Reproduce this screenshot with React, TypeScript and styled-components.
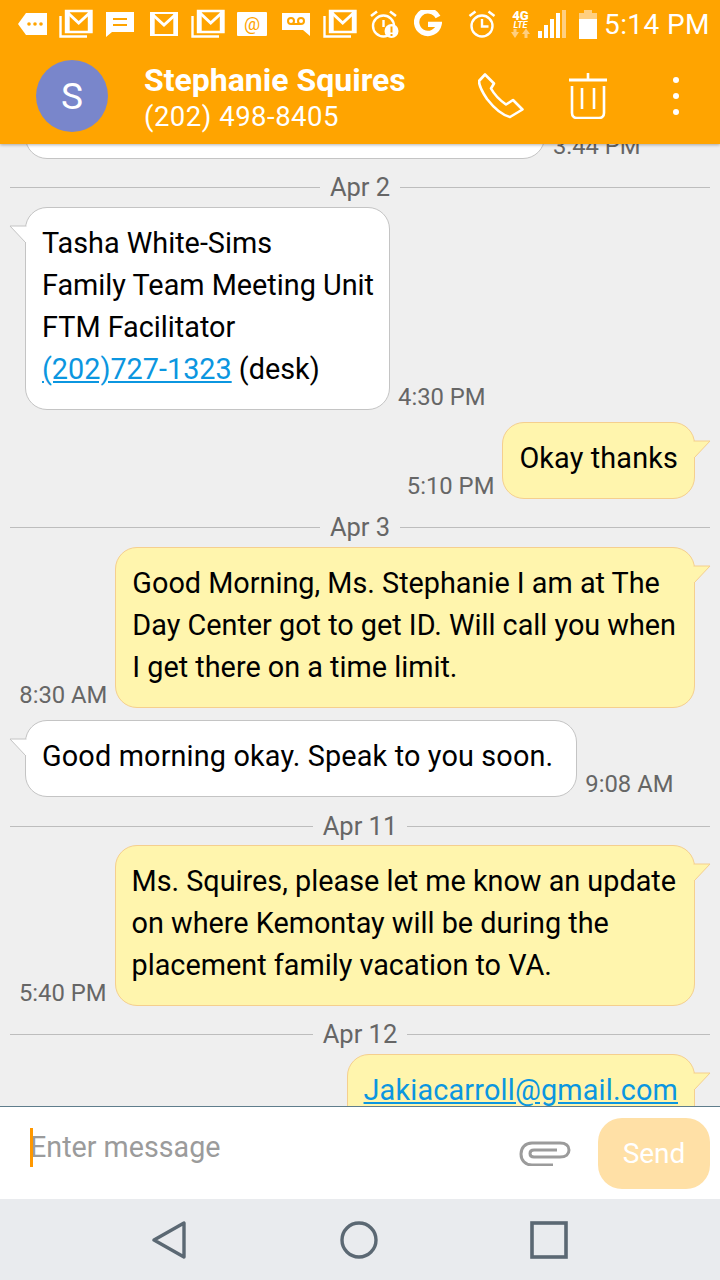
import React from "react";
import styled, { createGlobalStyle } from "styled-components";

const GlobalStyle = createGlobalStyle`
  html, body {
    margin: 0;
    padding: 0;
    background: #efefef;
  }
  body {
    font-family: Roboto, "Noto Sans", sans-serif;
  }
`;

const Screen = styled.div`
  width: 720px;
  height: 1280px;
  display: flex;
  flex-direction: column;
  overflow: hidden;
  background: #efefef;
`;

const TopBar = styled.header`
  height: 144px;
  flex: none;
  background: #ffa400;
  color: #fff;
  display: flex;
  flex-direction: column;
  box-shadow: 0 1px 3px rgba(0, 0, 0, 0.3);
  position: relative;
  z-index: 2;
`;

const StatusBar = styled.div`
  height: 48px;
  display: flex;
  align-items: center;
  padding: 0 12px 0 18px;
`;

const StatusIcon = styled.svg<{ $ml?: number }>`
  display: block;
  flex: none;
  margin-left: ${({ $ml }) => $ml ?? 0}px;
`;

const Clock = styled.span`
  font-size: 28px;
  margin: 1px 0 0 7px;
  letter-spacing: 0.4px;
  white-space: nowrap;
`;

const ContactBar = styled.div`
  flex: 1;
  display: flex;
  align-items: center;
  padding: 0 0 0 36px;
`;

const Avatar = styled.div`
  width: 72px;
  height: 72px;
  border-radius: 50%;
  background: #7986cb;
  display: flex;
  align-items: center;
  justify-content: center;
  font-size: 37px;
  margin-right: 36px;
  flex: none;
`;

const ContactInfo = styled.div`
  flex: 1;
  display: flex;
  flex-direction: column;
  padding-top: 5px;
`;

const ContactName = styled.div`
  font-size: 32px;
  font-weight: 700;
  line-height: 37px;
  white-space: nowrap;
`;

const ContactPhone = styled.div`
  font-size: 27.5px;
  line-height: 36px;
  letter-spacing: 0.5px;
  white-space: nowrap;
`;

const Actions = styled.div`
  display: flex;
  align-items: center;
  width: 242px;
  flex: none;
`;

const MessageList = styled.main`
  flex: 1;
  min-height: 0;
  overflow: hidden;
  display: flex;
  flex-direction: column;
`;

const DateRow = styled.div<{ $mt: number }>`
  display: flex;
  align-items: center;
  height: 40px;
  margin-top: ${({ $mt }) => $mt}px;
  padding: 0 10px;
  gap: 10px;
  color: #666;
  font-size: 25.5px;
  flex: none;

  &::before,
  &::after {
    content: "";
    flex: 1;
    height: 1px;
    background: #bdbdbd;
  }
`;

const Row = styled.div<{ $mine?: boolean; $mt: number }>`
  display: flex;
  flex: none;
  align-items: flex-end;
  flex-direction: ${({ $mine }) => ($mine ? "row-reverse" : "row")};
  margin-top: ${({ $mt }) => $mt}px;
  padding: 0 25px;
`;

const Bubble = styled.div<{ $mine?: boolean; $track?: number; $endPad?: number }>`
  position: relative;
  box-sizing: border-box;
  padding: 14px ${({ $mine, $endPad }) => $endPad ?? ($mine ? 18 : 15)}px 19px 16px;
  border-radius: 22px;
  font-size: 28.8px;
  line-height: 42px;
  letter-spacing: ${({ $track }) => $track ?? 0}px;
  color: #000;
  white-space: nowrap;
  background: ${({ $mine }) => ($mine ? "#fff5ad" : "#fff")};
  border: 1px solid ${({ $mine }) => ($mine ? "#f5cf8e" : "#c4c4c4")};
`;

const ClippedBubble = styled(Bubble)`
  width: 520px;
  height: 85px;
`;

const Tail = styled.svg<{ $mine?: boolean }>`
  position: absolute;
  top: 17px;
  ${({ $mine }) => ($mine ? "right: -17px;" : "left: -17px;")}
`;

const Time = styled.span<{ $mine?: boolean }>`
  font-size: 23.8px;
  color: #666;
  line-height: 25px;
  margin: ${({ $mine }) => ($mine ? "0 8px 0 0" : "0 0 0 8px")};
  white-space: nowrap;
`;

const MessageLink = styled.a`
  color: #0b96e0;
  text-decoration: underline;
`;

const Composer = styled.footer`
  height: 93px;
  flex: none;
  box-sizing: border-box;
  background: #fff;
  border-top: 1px solid #5f7d8c;
  display: flex;
  align-items: center;
  padding: 0 10px 0 30px;
`;

const Placeholder = styled.div`
  flex: 1;
  font-size: 28.7px;
  color: #9b9b9b;
  line-height: 39px;
  margin-top: -12px;
  position: relative;

  &::before {
    content: "";
    position: absolute;
    left: 0;
    top: 0;
    width: 3px;
    height: 39px;
    background: #ff9800;
  }
`;

const SendButton = styled.button`
  width: 112px;
  height: 71px;
  border: none;
  border-radius: 24px;
  background: #ffe0a6;
  color: #fff;
  font-family: Roboto, sans-serif;
  font-size: 28px;
  margin-left: 27px;
  padding: 0;
`;

const NavBar = styled.nav`
  height: 81px;
  flex: none;
  background: #e9ebee;
  display: flex;
  align-items: center;
  padding: 0 0 0 152px;
`;

const incoming = (
  <Tail width="18" height="20" viewBox="0 0 18 20">
    <path d="M17 1H1L17 18" fill="#fff" stroke="#c4c4c4" strokeWidth="1" />
    <rect x="16" y="2" width="2" height="15" fill="#fff" />
  </Tail>
);

const outgoing = (
  <Tail $mine width="18" height="20" viewBox="0 0 18 20">
    <path d="M1 1H17L1 18" fill="#fff5ad" stroke="#f5cf8e" strokeWidth="1" />
    <rect x="0" y="2" width="2" height="15" fill="#fff5ad" />
  </Tail>
);

const GmailStack = ({ ml }: { ml: number }) => (
  <StatusIcon $ml={ml} width="34" height="30" viewBox="0 0 34 30" fill="none" stroke="#fff" strokeWidth="2.4">
    <path d="M1.5 7V27.5H28" />
    <path d="M7 2H32.5V23H7Z" />
    <path d="M9 4L19.7 14L30.5 4" strokeWidth="3" />
    <path d="M9 3V22M30.5 3V22" strokeWidth="3.4" />
  </StatusIcon>
);

const GmailSingle = ({ ml }: { ml: number }) => (
  <StatusIcon $ml={ml} width="28" height="24" viewBox="0 0 28 24" fill="none" stroke="#fff">
    <path d="M1 1H27V23H1Z" strokeWidth="2.2" />
    <path d="M3 3L14 13L25 3" strokeWidth="3" />
    <path d="M3 2V22M25 2V22" strokeWidth="3.4" />
  </StatusIcon>
);

export default function App() {
  return (
    <Screen>
      <GlobalStyle />
      <TopBar>
        <StatusBar>
          <StatusIcon width="29" height="24" viewBox="0 0 29 24">
            <path d="M8 1H29V23H8L0 12Z" fill="#fff" />
            <circle cx="11" cy="12" r="1.8" fill="#ffa400" />
            <circle cx="17" cy="12" r="1.8" fill="#ffa400" />
            <circle cx="23" cy="12" r="1.8" fill="#ffa400" />
          </StatusIcon>
          <GmailStack ml={12} />
          <StatusIcon $ml={13} width="28" height="26" viewBox="0 0 28 26">
            <path d="M0 1H28V21H6L0 26Z" fill="#fff" />
            <path d="M7 8H21M7 14H21" stroke="#ffa400" strokeWidth="2" />
          </StatusIcon>
          <GmailSingle ml={16} />
          <GmailStack ml={13} />
          <StatusIcon $ml={12} width="30" height="24" viewBox="0 0 30 24">
            <rect width="30" height="24" rx="1" fill="#fff" />
            <text x="15" y="18" fontFamily="Roboto, sans-serif" fontSize="18" fill="#ffa400" textAnchor="middle">@</text>
          </StatusIcon>
          <StatusIcon $ml={15} width="28" height="24" viewBox="0 0 28 24">
            <path d="M0 1H28V24L21 18H0Z" fill="#fff" />
            <circle cx="9" cy="9" r="3" fill="none" stroke="#ffa400" strokeWidth="2" />
            <circle cx="19" cy="9" r="3" fill="none" stroke="#ffa400" strokeWidth="2" />
            <path d="M9 12H19" stroke="#ffa400" strokeWidth="2" />
          </StatusIcon>
          <GmailStack ml={13} />
          <StatusIcon $ml={13} width="30" height="30" viewBox="0 0 30 30" fill="none" stroke="#fff">
            <circle cx="13.5" cy="17" r="10.5" strokeWidth="2.4" />
            <path d="M1 7L7 2.5M20 2.5L26 7" strokeWidth="2.6" />
            <path d="M13.5 11V18" strokeWidth="2.4" />
            <circle cx="21.5" cy="22" r="7" fill="#fff" stroke="none" />
            <path d="M21.5 17.5V23.5M21.5 25V27" stroke="#ffa400" strokeWidth="2" />
          </StatusIcon>
          <StatusIcon $ml={14} width="28" height="28" viewBox="0 0 28 28" fill="none" stroke="#fff" strokeWidth="5.4">
            <path d="M24 7A11.3 11.3 0 1 0 25 14.4H14" />
          </StatusIcon>
          <StatusIcon $ml={26} width="28" height="30" viewBox="0 0 28 30" fill="none" stroke="#fff">
            <circle cx="14" cy="17" r="10.5" strokeWidth="2.4" />
            <path d="M1.5 7L7.5 2.5M20.5 2.5L26.5 7" strokeWidth="2.6" />
            <path d="M14 10V17.5H20.5" strokeWidth="2.4" />
          </StatusIcon>
          <StatusIcon $ml={14} width="21" height="30" viewBox="0 0 21 30">
            <text x="10.5" y="11" fontFamily="Roboto, sans-serif" fontWeight="900" fontSize="13" fill="#fff" textAnchor="middle">4G</text>
            <text x="10.5" y="19" fontFamily="Roboto, sans-serif" fontWeight="700" fontStyle="italic" fontSize="9" fill="#fff" textAnchor="middle">LTE</text>
            <path d="M1 23H9L5 29Z" fill="#ffcf80" />
            <path d="M12 25L16 19.5L20 25Z" fill="#ffcf80" />
            <rect x="3.5" y="20" width="3" height="4" fill="#ffcf80" />
            <rect x="14.5" y="24" width="3" height="5" fill="#ffcf80" />
          </StatusIcon>
          <StatusIcon $ml={7} width="28" height="28" viewBox="0 0 28 28">
            <rect x="0" y="21" width="4" height="7" fill="#fff" />
            <rect x="6" y="15" width="4" height="13" fill="#fff" />
            <rect x="12" y="9" width="4" height="19" fill="#fff" />
            <rect x="18" y="3" width="4" height="25" fill="#fff" />
            <rect x="24" y="0" width="4" height="28" fill="#ffcf80" />
          </StatusIcon>
          <StatusIcon $ml={13} width="18" height="29" viewBox="0 0 18 29">
            <path d="M5 0H13V3H18V9H0V3H5Z" fill="#ffcf80" />
            <rect y="9" width="18" height="20" fill="#fff" />
          </StatusIcon>
          <Clock>5:14 PM</Clock>
        </StatusBar>
        <ContactBar>
          <Avatar>S</Avatar>
          <ContactInfo>
            <ContactName>Stephanie Squires</ContactName>
            <ContactPhone>(202) 498-8405</ContactPhone>
          </ContactInfo>
          <Actions>
            <StatusIcon width="46" height="46" viewBox="0 0 46 46" fill="none" stroke="#fff" strokeWidth="2.6" strokeLinejoin="round">
              <path d="M7 1.5L1 8C1 12 3 17 9 26C16 35 24 42 32 44L44.5 36.5L35 27L28 31.5C23 28 16 21 13 15.5L16 10.5Z" />
            </StatusIcon>
            <StatusIcon $ml={45} width="38" height="46" viewBox="0 0 38 46" fill="none" stroke="#fff" strokeWidth="2.6">
              <path d="M0 7H38" strokeWidth="2.8" />
              <path d="M19 0V7" />
              <path d="M3 13V40C3 43 5 45 8 45H30C33 45 35 43 35 40V13" />
              <path d="M13 15V36M25 15V36" />
            </StatusIcon>
            <StatusIcon $ml={65} width="8" height="42" viewBox="0 0 8 42" fill="#fff">
              <circle cx="4" cy="5" r="3" />
              <circle cx="4" cy="21" r="3" />
              <circle cx="4" cy="37" r="3" />
            </StatusIcon>
          </Actions>
        </ContactBar>
      </TopBar>

      <MessageList>
        <Row $mt={-70}>
          <ClippedBubble />
          <Time>3:44 PM</Time>
        </Row>

        <DateRow $mt={8}>Apr 2</DateRow>
        <Row $mt={0}>
          <Bubble>
            {incoming}
            Tasha White-Sims
            <br />
            Family Team Meeting Unit
            <br />
            FTM Facilitator
            <br />
            <MessageLink>(202)727-1323</MessageLink> (desk)
          </Bubble>
          <Time>4:30 PM</Time>
        </Row>

        <Row $mine $mt={12}>
          <Bubble $mine $endPad={16} $track={0.15}>
            {outgoing}
            Okay thanks
          </Bubble>
          <Time $mine>5:10 PM</Time>
        </Row>

        <DateRow $mt={8}>Apr 3</DateRow>
        <Row $mine $mt={0}>
          <Bubble $mine>
            {outgoing}
            Good Morning, Ms. Stephanie I am at The
            <br />
            Day Center got to get ID. Will call you when
            <br />
            I get there on a time limit.
          </Bubble>
          <Time $mine>8:30 AM</Time>
        </Row>

        <Row $mt={12}>
          <Bubble $track={0.16} $endPad={23}>
            {incoming}
            Good morning okay. Speak to you soon.
          </Bubble>
          <Time>9:08 AM</Time>
        </Row>

        <DateRow $mt={9}>Apr 11</DateRow>
        <Row $mine $mt={-1}>
          <Bubble $mine>
            {outgoing}
            Ms. Squires, please let me know an update
            <br />
            on where Kemontay will be during the
            <br />
            placement family vacation to VA.
          </Bubble>
          <Time $mine>5:40 PM</Time>
        </Row>

        <DateRow $mt={8}>Apr 12</DateRow>
        <Row $mine $mt={0}>
          <Bubble $mine $endPad={16} $track={0.18}>
            {outgoing}
            <MessageLink>Jakiacarroll@gmail.com</MessageLink>
          </Bubble>
        </Row>
      </MessageList>

      <Composer>
        <Placeholder>Enter message</Placeholder>
        <StatusIcon width="52" height="26" viewBox="0 0 52 26" fill="none" stroke="#9b9b9b" strokeWidth="3">
          <path d="M34 25H13C6 25 2 20 2 14C2 8 6 3 13 3H41C47 3 50 6 50 10C50 14 47 17 41 17H15C12 17 11 15 11 13.5C11 12 12 10 15 10H38" />
        </StatusIcon>
        <SendButton>Send</SendButton>
      </Composer>

      <NavBar>
        <StatusIcon width="34" height="38" viewBox="0 0 34 38" fill="none" stroke="#5b6873" strokeWidth="3.4" strokeLinejoin="round">
          <path d="M32 2V36L2 19Z" />
        </StatusIcon>
        <StatusIcon $ml={154} width="38" height="38" viewBox="0 0 38 38" fill="none" stroke="#5b6873" strokeWidth="3.4">
          <circle cx="19" cy="19" r="17" />
        </StatusIcon>
        <StatusIcon $ml={152} width="38" height="38" viewBox="0 0 38 38" fill="none" stroke="#5b6873" strokeWidth="3.6">
          <rect x="2" y="2" width="34" height="34" />
        </StatusIcon>
      </NavBar>
    </Screen>
  );
}
